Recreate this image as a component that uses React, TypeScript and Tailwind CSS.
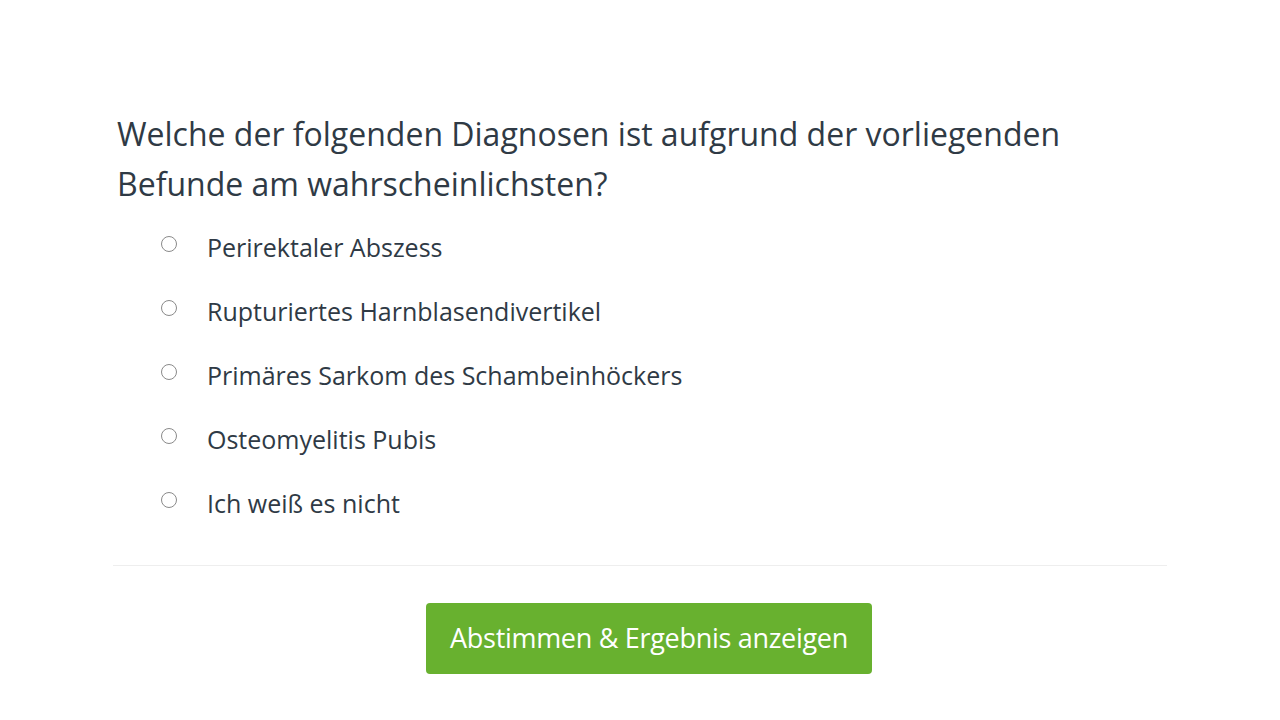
export default function App() {
  const options = [
    'Perirektaler Abszess',
    'Rupturiertes Harnblasendivertikel',
    'Primäres Sarkom des Schambeinhöckers',
    'Osteomyelitis Pubis',
    'Ich weiß es nicht',
  ]

  return (
    <div className="w-[1280px] h-[720px] bg-white text-[#2f3a45] font-['Open_Sans','Liberation_Sans',sans-serif] overflow-hidden">
      <div className="pt-[109px] px-[113px]">
        <h2 className="pl-[4px] text-[32px] leading-[50px] font-normal max-w-[1000px]">
          Welche der folgenden Diagnosen ist aufgrund der vorliegenden Befunde am wahrscheinlichsten?
        </h2>
        <div className="mt-[22px] pl-[48px] flex flex-col gap-[32px]">
          {options.map((o) => (
            <label key={o} className="flex items-center h-[32px]">
              <span className="w-[16px] h-[16px] rounded-full border border-[#8a8a8a] bg-white mb-[6px]" />
              <span className="ml-[30px] text-[25px] leading-[32px]">{o}</span>
            </label>
          ))}
        </div>
        <hr className="mt-[46px] border-t border-[#eeeeee]" />
        <div className="flex justify-center mt-[37px]">
          <button className="ml-[18px] w-[446px] h-[71px] rounded-[4px] bg-[#68b12f] text-white text-[27px] tracking-[-0.3px]">
            Abstimmen &amp; Ergebnis anzeigen
          </button>
        </div>
      </div>
    </div>
  )
}
